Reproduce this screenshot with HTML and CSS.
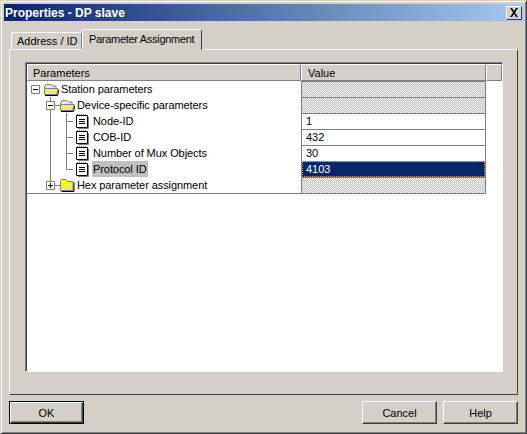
FILE: index.html
```html
<!DOCTYPE html>
<html lang="en">
<head>
<meta charset="utf-8">
<title>Properties - DP slave</title>
<link rel="stylesheet" href="styles.css">
</head>
<body>
<svg class="defs" width="0" height="0" aria-hidden="true">
  <symbol id="open" viewBox="0 0 16 16">
    <path d="M1.500 5.500 3.500 3.500H8l1.500 1.500h3.500v3H1.500z" fill="#e8e8e0" stroke="#808080"/>
    <path d="M2.500 7.500H15l-1.500 6H1.500V8z" fill="#eeee58" stroke="#808080"/>
    <path d="M2 14.500h12.500l1.500-6" fill="none" stroke="#000"/>
  </symbol>
  <symbol id="closed" viewBox="0 0 16 16">
    <path d="M1.500 13.500v-10l1-1H7l1.500 2h5.500v9z" fill="#eeee58" stroke="#808080"/>
    <path d="M2 4.500h5" stroke="#fff"/>
    <path d="M2.500 14.500h12.500v-9" fill="none" stroke="#000"/>
  </symbol>
  <symbol id="doc" viewBox="0 0 16 16">
    <path d="M1.500 2.500h11v12h-11z" fill="#fff" stroke="#000"/>
    <path d="M2 1.500h1m1 0h1m1 0h1m1 0h1m1 0h1" stroke="#808080"/>
    <path d="M4 6.500h6M4 8.500h6M4 10.500h6" stroke="#000"/>
    <path d="M13.500 4v11.500H3" fill="none" stroke="#808080"/>
  </symbol>
</svg>
<div class="window">
  <div class="titlebar">
    <span class="title">Properties - DP slave</span>
    <button class="close" type="button" aria-label="Close">
      <svg width="10" height="9" viewBox="0 0 10 9"><path d="M1 0h2l2 3 2-3h2L6 4.500 9 9H7L5 6 3 9H1l3-4.500z" fill="#000"/></svg>
    </button>
  </div>
  <div class="tabs">
    <div class="tab">Address / ID</div>
    <div class="tab active">Parameter Assignment</div>
  </div>
  <div class="panel">
    <div class="list">
      <div class="head">
        <div class="hcell hparams">Parameters</div>
        <div class="hcell hvalue">Value</div>
        <div class="hcell hrest"></div>
      </div>
      <div class="body">
        <div class="tree">
          <div class="row r1">
            <svg class="guide" width="33" height="16" viewBox="0 0 33 16">
              <path d="M4.500 4.500h8v8h-8z" fill="#fff" stroke="#808080"/><path d="M6 8.500h5" stroke="#000"/>
              <use href="#open" x="16" y="0" width="16" height="16"/>
            </svg>
            <span class="label">Station parameters</span>
          </div>
          <div class="row">
            <svg class="guide" width="49" height="16" viewBox="0 0 49 16">
              <path d="M23.500 0v4M27 8.500h6" stroke="#808080"/>
              <path d="M19.500 4.500h8v8h-8z" fill="#fff" stroke="#808080"/><path d="M21 8.500h5" stroke="#000"/>
              <path d="M23.500 12.500v3.500" stroke="#808080"/>
              <use href="#open" x="32" y="0" width="16" height="16"/>
            </svg>
            <span class="label">Device-specific parameters</span>
          </div>
          <div class="row">
            <svg class="guide" width="65" height="16" viewBox="0 0 65 16">
              <path d="M23.500 0v16M39.500 0v16M40 8.500h6" stroke="#808080"/>
              <use href="#doc" x="48" y="0" width="16" height="16"/>
            </svg>
            <span class="label">Node-ID</span>
          </div>
          <div class="row">
            <svg class="guide" width="65" height="16" viewBox="0 0 65 16">
              <path d="M23.500 0v16M39.500 0v16M40 8.500h6" stroke="#808080"/>
              <use href="#doc" x="48" y="0" width="16" height="16"/>
            </svg>
            <span class="label">COB-ID</span>
          </div>
          <div class="row">
            <svg class="guide" width="65" height="16" viewBox="0 0 65 16">
              <path d="M23.500 0v16M39.500 0v16M40 8.500h6" stroke="#808080"/>
              <use href="#doc" x="48" y="0" width="16" height="16"/>
            </svg>
            <span class="label">Number of Mux Objects</span>
          </div>
          <div class="row">
            <svg class="guide" width="65" height="16" viewBox="0 0 65 16">
              <path d="M23.500 0v16M39.500 0v8.500h6.500" fill="none" stroke="#808080"/>
              <use href="#doc" x="48" y="0" width="16" height="16"/>
            </svg>
            <span class="label selected">Protocol ID</span>
          </div>
          <div class="row">
            <svg class="guide" width="49" height="16" viewBox="0 0 49 16">
              <path d="M23.500 0v4M27 8.500h6" stroke="#808080"/>
              <path d="M19.500 4.500h8v8h-8z" fill="#fff" stroke="#808080"/><path d="M21 8.500h5M23.500 6v5" stroke="#000"/>
              <use href="#closed" x="32" y="0" width="16" height="16"/>
            </svg>
            <span class="label">Hex parameter assignment</span>
          </div>
        </div>
        <div class="values">
          <div class="cell hatch"></div>
          <div class="cell hatch"></div>
          <div class="cell">1</div>
          <div class="cell">432</div>
          <div class="cell">30</div>
          <div class="cell current">4103</div>
          <div class="cell hatch"></div>
        </div>
      </div>
      <div class="rule"></div>
    </div>
  </div>
  <div class="footer">
    <button class="btn default" type="button">OK</button>
    <div class="btn-group">
      <button class="btn" type="button">Cancel</button>
      <button class="btn" type="button">Help</button>
    </div>
  </div>
</div>
</body>
</html>
```
FILE: styles.css
```css
* { box-sizing: border-box; }
html, body { margin: 0; padding: 0; width: 527px; height: 434px; overflow: hidden; }
body { background: #d4d0c8; font-family: "Liberation Sans", Arial, sans-serif; font-size: 11px; color: #000; }
.defs { position: absolute; }
.window {
  width: 527px; height: 434px; padding: 3px 2px 2px 3px;
  display: flex; flex-direction: column;
  background: #d4d0c8;
  border: 1px solid; border-color: #d4d0c8 #404040 #404040 #d4d0c8;
  box-shadow: inset 1px 1px 0 #fff, inset -1px -1px 0 #808080;
}
.titlebar {
  height: 17px; flex: none; display: flex; align-items: center; justify-content: space-between;
  padding: 0 2px 0 1px;
  background: linear-gradient(90deg, #0a246a, #a6caf0);
  color: #fff;
}
.title { font-weight: bold; font-size: 12px; }
.close {
  width: 16px; height: 14px; padding: 0; display: flex; align-items: center; justify-content: center;
  background: #d4d0c8; border: 1px solid; border-color: #fff #404040 #404040 #fff;
}
.tabs { display: flex; align-items: flex-end; height: 28px; flex: none; padding-left: 7px; position: relative; z-index: 1; }
.tab {
  width: 71px; height: 17px; padding: 2px 0 0 5px; white-space: nowrap;
  border: 1px solid; border-color: #fff #808080 transparent #fff; border-radius: 2px 2px 0 0;
  border-bottom: 0; background: #d4d0c8;
}
.tab.active { width: 120px; height: 21px; margin-bottom: -1px; padding: 3px 0 0 6px; border-right-color: #404040; letter-spacing: -0.3px; }
.panel {
  height: 346px; flex: none; margin: 0 6px 0 5px; padding: 12px 14px 23px 15px;
  border: 1px solid; border-color: #fff #404040 #404040 #fff;
}
.list {
  height: 310px; position: relative; background: #fff;
  border: 1px solid; border-color: #808080 #fff #fff #808080;
  box-shadow: inset 1px 1px 0 #404040;
  padding: 1px 0 0 1px;
}
.head { display: flex; height: 17px; background: #d4d0c8; }
.hcell { height: 17px; padding: 2px 0 0 6px; border: 1px solid; border-color: #fff #808080 #808080 #fff; }
.hparams { width: 274px; padding-left: 5px; }
.hvalue { width: 185px; }
.hrest { flex: 1; }
.body { display: flex; }
.tree { width: 274px; }
.row { display: flex; height: 16px; align-items: center; }
.guide { flex: none; display: block; }
.label { height: 16px; line-height: 16px; padding: 0 1px; white-space: nowrap; letter-spacing: -0.08px; }
.selected { background: #c0c0c0; }
.values { width: 185px; border-left: 1px solid #808080; border-right: 1px solid #808080; }
.cell { height: 16px; line-height: 14px; padding-left: 4px; border-top: 1px solid #808080; }
.hatch { background: repeating-conic-gradient(#c4c4c4 0 25%, #f0f0f0 0 50%) 0 0 / 2px 2px; }
.current { background: #0a246a; color: #fff; outline: 1px dotted #e0a030; outline-offset: -1px; }
.rule { height: 1px; background: #808080; width: 459px; }
.footer { flex: 1; display: flex; justify-content: space-between; padding: 6px 6px 0 5px; }
.btn-group { display: flex; gap: 6px; }
.btn {
  width: 75px; height: 23px; padding: 0; font: inherit; color: #000; background: #d4d0c8;
  border: 1px solid; border-color: #fff #404040 #404040 #fff;
  box-shadow: inset -1px -1px 0 #808080;
}
.btn.default { border-color: #000; box-shadow: inset 1px 1px 0 #fff, inset -1px -1px 0 #404040, inset -2px -2px 0 #808080; }
```
